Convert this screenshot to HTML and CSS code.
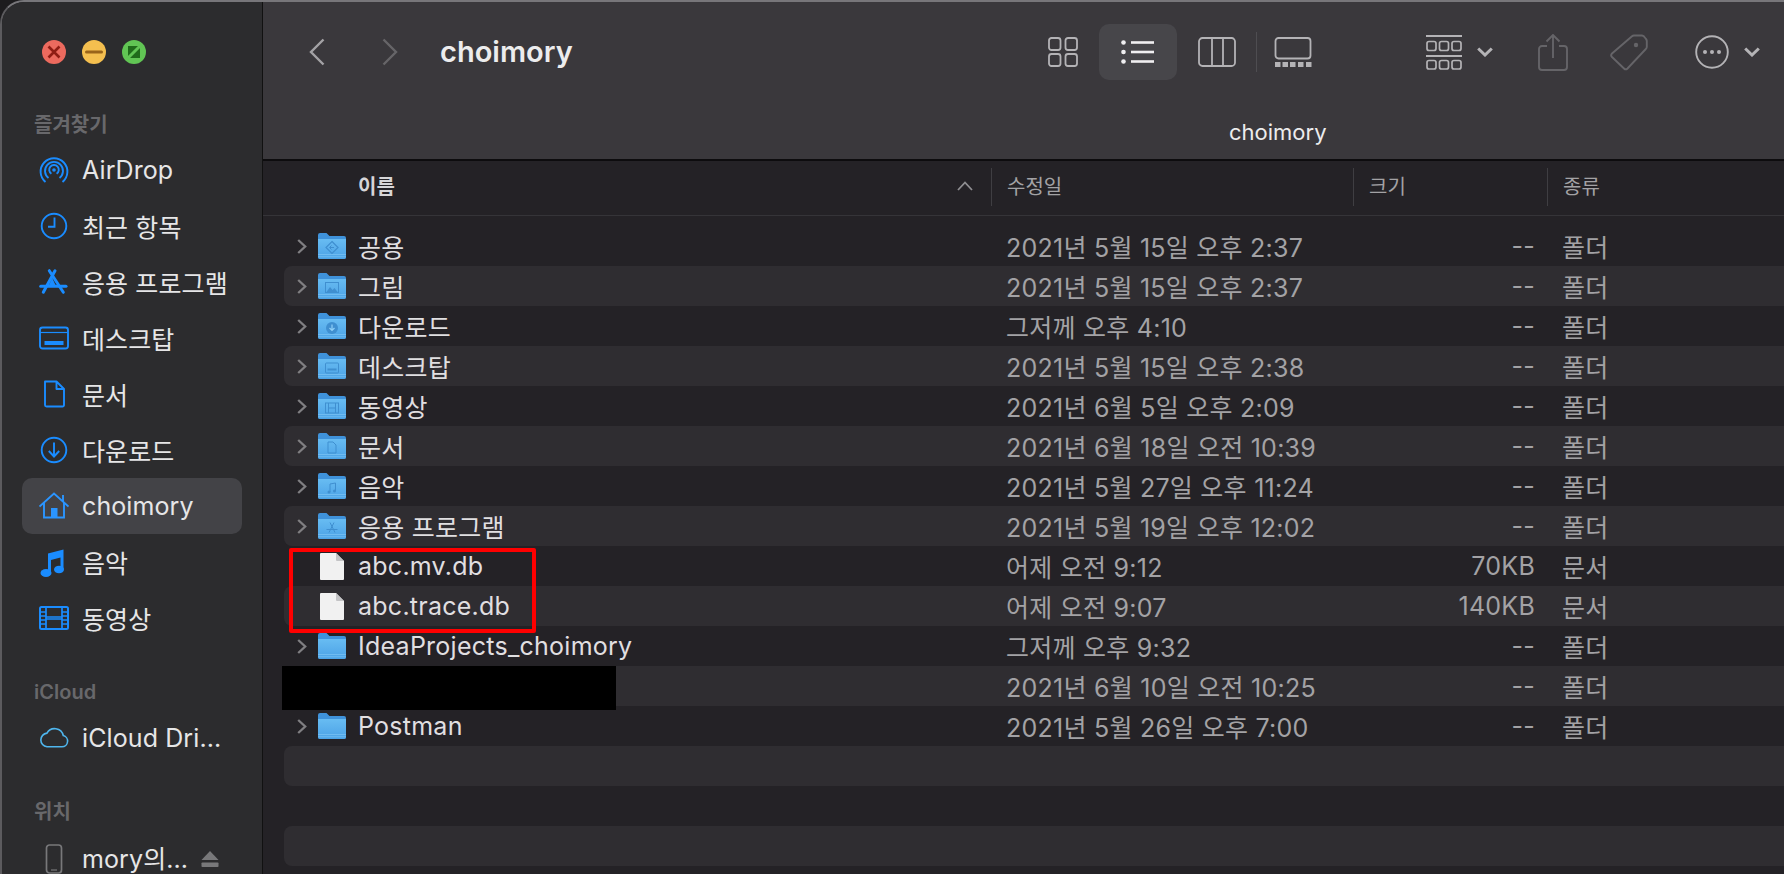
FILE: index.html
```html
<!DOCTYPE html>
<html>
<head>
<meta charset="UTF-8">
<title>choimory</title>
<link rel="stylesheet" href="styles.css">
</head>
<body>
<div class="window">

	<div class="sidebar">
		<div class="lights">
			<svg class="light" viewBox="0 0 24 24"><circle cx="12" cy="12" r="12" fill="#ec6a5e"/><path d="M6.500 6.500l11 11M17.500 6.500l-11 11" stroke="#8f1d14" stroke-width="2.600"/></svg>
			<svg class="light" viewBox="0 0 24 24"><circle cx="12" cy="12" r="12" fill="#f4bf4f"/><path d="M4.500 12h15" stroke="#99641a" stroke-width="3" stroke-linecap="round"/></svg>
			<svg class="light" viewBox="0 0 24 24"><circle cx="12" cy="12" r="12" fill="#61c554"/><path d="M6 6h12v12H6z" fill="#1f6b1a"/><path d="M4 20L20 4" stroke="#61c554" stroke-width="3"/></svg>
		</div>

		<div class="side-title first">즐겨찾기</div>
		<div class="side-item">
			<svg class="side-icon" viewBox="0 0 30 30"><g fill="none" stroke="#1a8cff" stroke-width="1.900"><path d="M6.500 27A13.400 13.400 0 1 1 23.500 27"/><path d="M9.500 23A9 9 0 1 1 20.500 23"/><path d="M12.400 18.800A4.800 4.800 0 1 1 17.600 18.800"/></g><circle cx="15" cy="15" r="1.800" fill="#1a8cff"/></svg>
			<span>AirDrop</span>
		</div>
		<div class="side-item">
			<svg class="side-icon" viewBox="0 0 30 30"><g fill="none" stroke="#1a8cff" stroke-width="1.900"><circle cx="15" cy="15" r="12.300"/><path d="M15.500 6.500V15.800H9"/></g></svg>
			<span>최근 항목</span>
		</div>
		<div class="side-item">
			<svg class="side-icon" viewBox="0 0 30 30"><g fill="none" stroke="#1a8cff" stroke-linecap="round"><path d="M16 3.700L4.300 25.300M10.300 3.700L24.300 25.300" stroke-width="3"/><path d="M1.700 19.300H27" stroke-width="3"/><path d="M13.200 11L10 18h6.500z" fill="#1a8cff" stroke="none"/></g></svg>
			<span>응용 프로그램</span>
		</div>
		<div class="side-item">
			<svg class="side-icon" viewBox="0 0 30 30"><rect x="1" y="4.500" width="28" height="21" rx="2.500" fill="none" stroke="#1a8cff" stroke-width="1.900"/><path d="M1 9.500h28" stroke="#1a8cff" stroke-width="1.200"/><rect x="5.500" y="18" width="19" height="4" fill="#1a8cff"/></svg>
			<span>데스크탑</span>
		</div>
		<div class="side-item">
			<svg class="side-icon" viewBox="0 0 30 30"><path d="M6 2.500h11.500L25 10v16a1.500 1.500 0 0 1-1.500 1.500h-16A1.500 1.500 0 0 1 6 26zM17.500 2.500V10H25" fill="none" stroke="#1a8cff" stroke-width="1.900" stroke-linejoin="round"/></svg>
			<span>문서</span>
		</div>
		<div class="side-item">
			<svg class="side-icon" viewBox="0 0 30 30"><g fill="none" stroke="#1a8cff" stroke-width="1.900"><circle cx="15" cy="15" r="12.300"/><path d="M15 7.500V21M9.800 16L15 21.500L20.200 16"/></g></svg>
			<span>다운로드</span>
		</div>
		<div class="side-item active">
			<svg class="side-icon" viewBox="0 0 30 30"><g fill="none" stroke="#2b95ff" stroke-width="1.900"><path d="M0.500 15.500L15 2.500L29.500 15.500"/><path d="M5 12v14.500h20V12M24 4v7"/></g><rect x="12" y="17" width="6.500" height="9.500" fill="#2b95ff"/></svg>
			<span>choimory</span>
		</div>
		<div class="side-item">
			<svg class="side-icon" viewBox="0 0 30 30"><path d="M9 6.500L24.500 2.500V22h-3V10.500L12 13v14h-3z" fill="#1a8cff"/><ellipse cx="7" cy="26" rx="5.500" ry="4" fill="#1a8cff"/><ellipse cx="20" cy="22.500" rx="5" ry="3.800" fill="#1a8cff"/></svg>
			<span>음악</span>
		</div>
		<div class="side-item">
			<svg class="side-icon" viewBox="0 0 30 30"><rect x="1" y="4" width="28" height="22" rx="1.500" fill="none" stroke="#1a8cff" stroke-width="2"/><path d="M7 4v22M23 4v22M7 14h16M7 16h16M1 9h6M1 13h6M1 17h6M1 21h6M23 9h6M23 13h6M23 17h6M23 21h6" fill="none" stroke="#1a8cff" stroke-width="1.700"/></svg>
			<span>동영상</span>
		</div>

		<div class="side-title icloud">iCloud</div>
		<div class="side-item">
			<svg class="side-icon" viewBox="0 0 34 30"><path d="M9 25h17a6.500 6.500 0 0 0 1.500-12.800A10 10 0 0 0 9 9.500A7.800 7.800 0 0 0 9 25z" fill="none" stroke="#4fb6ee" stroke-width="1.800"/></svg>
			<span>iCloud Dri...</span>
		</div>

		<div class="side-title place">위치</div>
		<div class="side-item device">
			<svg class="side-icon" viewBox="0 0 30 30"><rect x="7.500" y="1" width="15" height="28" rx="3" fill="none" stroke="#78787a" stroke-width="1.700"/><path d="M12 26h6" stroke="#78787a" stroke-width="1.200"/></svg>
			<span class="device-name">mory의...</span>
			<svg class="eject" viewBox="0 0 18 18"><path d="M9 1L17.500 10H0.500z" fill="#78787a"/><rect x="0.500" y="12.500" width="17" height="4.500" rx="0.800" fill="#78787a"/></svg>
		</div>
	</div>

	<div class="main">
		<div class="toolbar">
			<div class="tool-row">
				<svg class="nav back" viewBox="0 0 16 28"><path d="M14.500 1.500L2 14l12.500 12.500" fill="none" stroke="#a3a2a5" stroke-width="2.400"/></svg>
				<svg class="nav forward" viewBox="0 0 16 28"><path d="M1.500 1.500L14 14L1.500 26.500" fill="none" stroke="#666568" stroke-width="2.400"/></svg>
				<div class="path-title">choimory</div>
				<div class="views">
					<svg class="view-icon grid" viewBox="0 0 30 30"><g fill="none" stroke="#b4b3b6" stroke-width="1.800"><rect x="1" y="1" width="11.500" height="12" rx="2.500"/><rect x="17.500" y="1" width="11.500" height="12" rx="2.500"/><rect x="1" y="17" width="11.500" height="12" rx="2.500"/><rect x="17.500" y="17" width="11.500" height="12" rx="2.500"/></g></svg>
					<div class="view-on">
						<svg class="list-icon" viewBox="0 0 34 24"><g fill="#f0eff1"><circle cx="2.500" cy="2.500" r="2.300"/><circle cx="2.500" cy="12" r="2.300"/><circle cx="2.500" cy="21.500" r="2.300"/><rect x="10" y="1.200" width="23" height="2.600"/><rect x="10" y="10.700" width="23" height="2.600"/><rect x="10" y="20.200" width="23" height="2.600"/></g></svg>
					</div>
					<svg class="view-icon cols" viewBox="0 0 38 30"><g fill="none" stroke="#b4b3b6" stroke-width="1.800"><rect x="1" y="1" width="36" height="28" rx="3.500"/><path d="M14 1v28M25 1v28"/></g></svg>
					<div class="view-sep"></div>
					<svg class="view-icon gallery" viewBox="0 0 38 30"><rect x="1.500" y="1" width="35" height="20.500" rx="3" fill="none" stroke="#b4b3b6" stroke-width="1.800"/><g fill="#b4b3b6"><rect x="1" y="25" width="5.500" height="5"/><rect x="8.500" y="25" width="5.500" height="5"/><rect x="16" y="25" width="5.500" height="5"/><rect x="24" y="25" width="5.500" height="5"/><rect x="32" y="25" width="5.500" height="5"/></g></svg>
				</div>
				<div class="actions">
					<svg class="group-icon" viewBox="0 0 36 35"><g fill="none" stroke="#b4b3b6" stroke-width="1.700"><rect x="1" y="6.500" width="9" height="9" rx="2"/><rect x="13.500" y="6.500" width="9" height="9" rx="2"/><rect x="26" y="6.500" width="9" height="9" rx="2"/><rect x="1" y="25.500" width="9" height="8.500" rx="2"/><rect x="13.500" y="25.500" width="9" height="8.500" rx="2"/><rect x="26" y="25.500" width="9" height="8.500" rx="2"/></g><rect width="36" height="2" fill="#b4b3b6"/><rect y="20" width="36" height="2" fill="#b4b3b6"/></svg>
					<svg class="chev" viewBox="0 0 16 10"><path d="M1.200 1.500L8 8l6.800-6.500" fill="none" stroke="#b4b3b6" stroke-width="3"/></svg>
					<svg class="share-icon" viewBox="0 0 30 37"><g fill="none" stroke="#656468" stroke-width="1.900"><path d="M9 12H4a3 3 0 0 0-3 3v18a3 3 0 0 0 3 3h22a3 3 0 0 0 3-3V15a3 3 0 0 0-3-3h-5"/><path d="M15 1v23M8.500 7.500L15 1l6.500 6.500"/></g></svg>
					<svg class="tag-icon" viewBox="0 0 38 37"><path d="M24 1.500h8a3 3 0 0 1 2 1l2 2.500a3 3 0 0 1 .8 2v6a3 3 0 0 1-1 2L17.500 34.500a2.500 2.500 0 0 1-3.500 0L2 23a2.500 2.500 0 0 1 0-3.500L22 2.200a3 3 0 0 1 2-.7z" fill="none" stroke="#656468" stroke-width="1.900"/><circle cx="26" cy="11" r="2.200" fill="#656468"/></svg>
					<svg class="more-icon" viewBox="0 0 34 34"><circle cx="17" cy="17" r="15.800" fill="none" stroke="#b4b3b6" stroke-width="1.900"/><g fill="#b4b3b6"><circle cx="10" cy="17" r="2"/><circle cx="17" cy="17" r="2"/><circle cx="24" cy="17" r="2"/></g></svg>
					<svg class="chev" viewBox="0 0 16 10"><path d="M1.200 1.500L8 8l6.800-6.500" fill="none" stroke="#b4b3b6" stroke-width="3"/></svg>
				</div>
			</div>
			<div class="folder-title">choimory</div>
		</div>

		<div class="list-head">
			<div class="col-name head-name">
				<span>이름</span>
				<svg class="sort" viewBox="0 0 16 10"><path d="M1 9l7-7.500L15 9" fill="none" stroke="#8f8e91" stroke-width="1.800"/></svg>
			</div>
			<div class="col-date head-cell">수정일</div>
			<div class="col-size head-cell">크기</div>
			<div class="col-kind head-cell">종류</div>
		</div>

		<div class="list" id="list">
			<div class="censor"></div>
			<div class="mark"></div>
		</div>
	</div>
</div>

<svg class="defs" width="0" height="0">
	<defs>
		<linearGradient id="folderBody" x1="0" y1="0" x2="0" y2="1">
			<stop offset="0" stop-color="#68bcf2"/>
			<stop offset="1" stop-color="#4ba2e6"/>
		</linearGradient>
	</defs>
	<symbol id="folder" viewBox="0 0 28 26">
		<path d="M0 2a2 2 0 0 1 2-2h6.500l3 3H26a2 2 0 0 1 2 2v19a2 2 0 0 1-2 2H2a2 2 0 0 1-2-2z" fill="#3f92da"/>
		<path d="M0 6h28v18a2 2 0 0 1-2 2H2a2 2 0 0 1-2-2z" fill="url(#folderBody)"/>
		<path d="M0 21.500h28M0 23.800h28" stroke="#79c2f2" stroke-width="0.800"/>
	</symbol>
	<symbol id="doc" viewBox="0 0 24 27">
		<path d="M1 0h15l8 8v18a1 1 0 0 1-1 1H1a1 1 0 0 1-1-1V1a1 1 0 0 1 1-1z" fill="#f1f1f1"/>
		<path d="M16 0l8 8h-7a1 1 0 0 1-1-1z" fill="#c4c4c6"/>
	</symbol>
</svg>

<script>
// 폴더 표시 아이콘 (공용, 그림 ...)
var glyphs = {
	pub: '<path d="M14 8.500l6 6-6 6-6-6z" fill="none" stroke="#3f8fd0" stroke-width="1.200"/><path d="M12 14.500h4M13.500 12.500l-2 2 2 2" fill="none" stroke="#3f8fd0"/>',
	pic: '<rect x="7.500" y="9.500" width="13" height="10" fill="none" stroke="#3f8fd0"/><path d="M8.500 19l3.500-5 2.500 3 2-2 3 4z" fill="#3f8fd0"/>',
	down: '<circle cx="14" cy="15" r="6" fill="#3f8fd0"/><path d="M14 11.500v6M11.500 15l2.500 2.500 2.500-2.500" fill="none" stroke="#8fd0f8" stroke-width="1.200"/>',
	desk: '<rect x="7.500" y="10" width="13" height="10" rx="1" fill="none" stroke="#3f8fd0"/><rect x="9.500" y="15.500" width="9" height="2" fill="#3f8fd0"/>',
	movie: '<rect x="7.500" y="10" width="13" height="10" fill="none" stroke="#3f8fd0"/><path d="M10.500 10v10M17.500 10v10M10.500 15h7" stroke="#3f8fd0"/>',
	doc: '<path d="M10 9h5l3 3v8h-8z" fill="none" stroke="#3f8fd0"/>',
	music: '<path d="M12 11l5.500-1v8M12 11v8" fill="none" stroke="#3f8fd0"/><circle cx="11" cy="19" r="1.500" fill="#3f8fd0"/><circle cx="16.500" cy="18" r="1.500" fill="#3f8fd0"/>',
	app: '<path d="M12 9.500l5 10M16 9.500l-5 10M8.500 16.500h11" fill="none" stroke="#3f8fd0"/>'
};

var rows = [
	["공용", "2021년 5월 15일 오후 2:37", "--", "폴더", "pub"],
	["그림", "2021년 5월 15일 오후 2:37", "--", "폴더", "pic"],
	["다운로드", "그저께 오후 4:10", "--", "폴더", "down"],
	["데스크탑", "2021년 5월 15일 오후 2:38", "--", "폴더", "desk"],
	["동영상", "2021년 6월 5일 오후 2:09", "--", "폴더", "movie"],
	["문서", "2021년 6월 18일 오전 10:39", "--", "폴더", "doc"],
	["음악", "2021년 5월 27일 오후 11:24", "--", "폴더", "music"],
	["응용 프로그램", "2021년 5월 19일 오후 12:02", "--", "폴더", "app"],
	["abc.mv.db", "어제 오전 9:12", "70KB", "문서", "file"],
	["abc.trace.db", "어제 오전 9:07", "140KB", "문서", "file"],
	["IdeaProjects_choimory", "그저께 오후 9:32", "--", "폴더", ""],
	["", "2021년 6월 10일 오전 10:25", "--", "폴더", ""],
	["Postman", "2021년 5월 26일 오후 7:00", "--", "폴더", ""],
	["", "", "", "", "blank"],
	["", "", "", "", "blank"],
	["", "", "", "", "blank"]
];

var oList = document.getElementById("list");
var html = "";

for (var i = 0; i < rows.length; i++) {
	var r = rows[i];
	var icon = "";
	var arrow = "";
	if (r[4] == "file") {
		icon = '<svg class="file-icon"><use href="#doc"/></svg>';
	} else if (r[4] != "blank") {
		arrow = '<svg class="arrow" viewBox="0 0 10 15"><path d="M1.200 1l7 6.500-7 6.500" fill="none" stroke="#807f82" stroke-width="2.300"/></svg>';
		icon = '<svg class="folder-icon" viewBox="0 0 28 26"><use href="#folder"/>' + (glyphs[r[4]] || "") + '</svg>';
	}
	html += '<div class="row' + (i % 2 == 1 ? " odd" : "") + '">'
		+ '<div class="col-name"><span class="arrow-box">' + arrow + '</span>' + icon + '<span class="name">' + r[0] + '</span></div>'
		+ '<div class="col-date">' + r[1] + '</div>'
		+ '<div class="col-size size">' + r[2] + '</div>'
		+ '<div class="col-kind">' + r[3] + '</div>'
		+ '</div>';
}
oList.innerHTML += html;
</script>
</body>
</html>
```

FILE: styles.css
```css
* {
	margin: 0;
	padding: 0;
	box-sizing: border-box;
}

html, body {
	height: 100%;
	overflow: hidden;
	background: #1d1c1e;
}

body {
	font-family: "Inter", "Noto Sans CJK KR", "Liberation Sans", sans-serif;
}

.defs {
	position: absolute;
}

.window {
	display: flex;
	width: 1784px;
	height: 874px;
	overflow: hidden;
	border-top-left-radius: 24px;
	border-top: 2px solid #77767a;
	border-left: 2px solid #5c5b5e;
}

/* sidebar */
.sidebar {
	width: 261px;
	flex: none;
	background: #2c2c2e;
	border-right: 1px solid #111;
	padding-left: 20px;
}

.lights {
	display: flex;
	gap: 16px;
	padding: 38px 0 0 20px;
}

.light {
	width: 24px;
	height: 24px;
}

.side-title {
	font-size: 20px;
	font-weight: 600;
	line-height: 24px;
	color: #68686b;
	padding-left: 12px;
}

.side-title.first {
	margin-top: 49px;
}

.side-title.icloud, .side-title.place {
	margin-top: 34px;
}

.side-item {
	display: flex;
	align-items: center;
	width: 220px;
	height: 56px;
	border-radius: 10px;
	font-size: 25px;
	letter-spacing: 0.1px;
	color: #e6e6e7;
	white-space: nowrap;
}

.side-title + .side-item {
	margin-top: 5px;
}

.side-title.icloud + .side-item {
	margin-top: 6px;
}

.side-title.place + .side-item {
	margin-top: 7px;
}

.side-item.active {
	background: #434347;
}

.side-icon {
	width: 30px;
	height: 30px;
	margin: 0 13px 0 17px;
	flex: none;
}

.device-name {
	width: 119px;
	line-height: 24px;
}

.eject {
	width: 18px;
	height: 18px;
	flex: none;
}

/* toolbar */
.main {
	flex: 1;
	min-width: 0;
	display: flex;
	flex-direction: column;
}

.toolbar {
	height: 159px;
	flex: none;
	background: #3a383c;
	border-bottom: 2px solid #0d0c0e;
}

.tool-row {
	display: flex;
	align-items: center;
	height: 56px;
	margin-top: 22px;
	padding-left: 46px;
}

.tool-row svg {
	flex: none;
}

.nav {
	width: 16px;
	height: 28px;
}

.nav.forward {
	margin-left: 57px;
}

.path-title {
	flex: none;
	width: 608px;
	margin-left: 42px;
	padding-bottom: 2px;
	font-size: 29px;
	font-weight: 600;
	color: #ececed;
}

.views {
	display: flex;
	flex: none;
	align-items: center;
	height: 56px;
}

.view-on {
	display: flex;
	flex: none;
	align-items: center;
	justify-content: center;
	width: 78px;
	height: 56px;
	margin: 0 21px;
	border-radius: 10px;
	background: #47464a;
}

.list-icon {
	width: 34px;
	height: 24px;
}

.view-icon.grid {
	width: 30px;
	height: 30px;
}

.view-icon.cols, .view-icon.gallery {
	width: 38px;
	height: 30px;
}

.view-sep {
	flex: none;
	width: 1px;
	height: 40px;
	margin: 0 17px 0 20px;
	background: #4e4d51;
}

.actions {
	display: flex;
	flex: none;
	align-items: center;
	margin-left: 114px;
}

.group-icon {
	width: 36px;
	height: 35px;
}

.chev {
	width: 16px;
	height: 10px;
	margin-left: 15px;
}

.share-icon {
	width: 30px;
	height: 37px;
	margin-left: 45px;
}

.tag-icon {
	width: 38px;
	height: 37px;
	margin-left: 42px;
}

.more-icon {
	width: 34px;
	height: 34px;
	margin-left: 47px;
}

.folder-title {
	margin-top: 40px;
	padding-left: 966px;
	font-size: 22px;
	line-height: 24px;
	color: #ececed;
}

/* list */
.list-head {
	display: flex;
	height: 55px;
	flex: none;
	padding-top: 7px;
	background: #242226;
	border-bottom: 1px solid #353438;
	font-size: 20px;
	color: #a3a2a5;
}

.list-head > div {
	height: 38px;
	padding-bottom: 3px;
	display: flex;
	align-items: center;
}

.col-name {
	width: 728px;
	flex: none;
	display: flex;
	align-items: center;
}

.head-name {
	color: #d6d5d8;
	font-weight: 600;
	padding-left: 95px;
	justify-content: space-between;
	padding-right: 18px;
}

.sort {
	width: 16px;
	height: 10px;
}

.head-cell {
	border-left: 1px solid #3f3e42;
	padding-left: 15px;
}

.col-date {
	width: 362px;
	flex: none;
}

.col-size {
	width: 194px;
	flex: none;
}

.col-kind {
	flex: 1;
}

.list {
	position: relative;
	flex: 1;
	padding-top: 10px;
	background: #242226;
}

.row {
	display: flex;
	align-items: center;
	height: 40px;
	margin-left: 21px;
	font-size: 25px;
	letter-spacing: 0.25px;
	color: #a3a2a5;
	white-space: nowrap;
}

.row.odd {
	background: #2f2d31;
	border-radius: 8px 0 0 8px;
}

.row .col-name {
	width: 722px;
	color: #e0dfe1;
}

.row .col-date {
	width: 341px;
}

.size {
	text-align: right;
	width: 188px;
}

.row .col-kind {
	padding-left: 27px;
}

.arrow-box {
	width: 34px;
	display: flex;
	justify-content: flex-end;
	padding-right: 11px;
	flex: none;
}

.arrow {
	width: 10px;
	height: 15px;
}

.folder-icon {
	width: 28px;
	height: 26px;
	flex: none;
}

.file-icon {
	width: 24px;
	height: 27px;
	flex: none;
	margin: 0 2px;
}

.name {
	margin-left: 12px;
}

/* overlays on the list */
.censor {
	position: absolute;
	left: 19px;
	top: 450px;
	width: 334px;
	height: 44px;
	background: #000;
	z-index: 2;
}

.mark {
	position: absolute;
	left: 26px;
	top: 332px;
	width: 247px;
	height: 85px;
	border: 4px solid #f00;
	border-radius: 2px;
	z-index: 2;
}
```
